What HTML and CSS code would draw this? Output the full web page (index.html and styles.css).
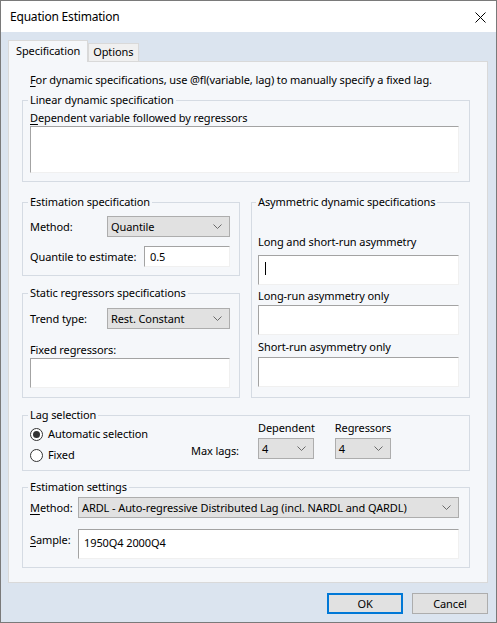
FILE: index.html
```html
<!DOCTYPE html>
<html>
<head>
<meta charset="utf-8">
<title>Equation Estimation</title>
<link rel="stylesheet" href="styles.css">
</head>
<body>
<div class="window">
  <div class="titlebar">
    <span class="title">Equation Estimation</span>
    <svg class="close" width="11" height="11" viewBox="0 0 11 11"><path d="M0.5 0.5L10.5 10.5M10.5 0.5L0.5 10.5" stroke="#000" stroke-width="1"/></svg>
  </div>
  <div class="client">
    <div class="tabs">
      <div class="tab active">Specification</div>
      <div class="tab">Options</div>
    </div>
    <div class="panel">
      <div class="intro"><u>F</u>or dynamic specifications, use @fl(variable, lag) to manually specify a fixed lag.</div>

      <fieldset class="group g-linear">
        <legend>Linear dynamic specification</legend>
        <div class="lbl"><u>D</u>ependent variable followed by regressors</div>
        <div class="edit h47"></div>
      </fieldset>

      <div class="cols">
        <div class="col-left">
          <fieldset class="group g-est">
            <legend>Estimation specification</legend>
            <div class="row r-method">
              <span class="rlbl w77">Method:</span>
              <div class="combo c-wide"><span>Quantile</span><svg width="9" height="5" viewBox="0 0 9 5"><path d="M0.5 0.5L4.5 4.5L8.5 0.5" fill="none" stroke="#6a6a6a"/></svg></div>
            </div>
            <div class="row r-quant">
              <span class="rlbl w114">Quantile to estimate:</span>
              <div class="edit e-quant">0.5</div>
            </div>
          </fieldset>

          <fieldset class="group g-static">
            <legend>Static regressors specifications</legend>
            <div class="row r-trend">
              <span class="rlbl w77">Trend type:</span>
              <div class="combo c-wide"><span>Rest. Constant</span><svg width="9" height="5" viewBox="0 0 9 5"><path d="M0.5 0.5L4.5 4.5L8.5 0.5" fill="none" stroke="#6a6a6a"/></svg></div>
            </div>
            <div class="lbl l-fixed">Fixed regressors:</div>
            <div class="edit h30"></div>
          </fieldset>
        </div>

        <fieldset class="group g-asym">
          <legend>Asymmetric dynamic specifications</legend>
          <div class="lbl l-ls">Long and short-run asymmetry</div>
          <div class="edit h30 e-ls"><span class="caret"></span></div>
          <div class="lbl l-lr">Long-run asymmetry only</div>
          <div class="edit h30 e-lr"></div>
          <div class="lbl l-sr">Short-run asymmetry only</div>
          <div class="edit h30 e-sr"></div>
        </fieldset>
      </div>

      <fieldset class="group g-lag">
        <legend>Lag selection</legend>
        <div class="lagrow">
          <div class="radios">
            <div class="radio on"><span class="dot"></span>Automatic selection</div>
            <div class="radio"><span class="dot"></span>Fixed</div>
          </div>
          <span class="maxlags">Max lags:</span>
          <div class="lagcol">
            <span class="laglbl">Dependent</span>
            <div class="combo c-small"><span>4</span><svg width="9" height="5" viewBox="0 0 9 5"><path d="M0.5 0.5L4.5 4.5L8.5 0.5" fill="none" stroke="#6a6a6a"/></svg></div>
          </div>
          <div class="lagcol">
            <span class="laglbl">Regressors</span>
            <div class="combo c-small"><span>4</span><svg width="9" height="5" viewBox="0 0 9 5"><path d="M0.5 0.5L4.5 4.5L8.5 0.5" fill="none" stroke="#6a6a6a"/></svg></div>
          </div>
        </div>
      </fieldset>

      <fieldset class="group g-settings">
        <legend>Estimation settings</legend>
        <div class="row r-smethod">
          <span class="rlbl w48"><u>M</u>ethod:</span>
          <div class="combo c-full"><span>ARDL - Auto-regressive Distributed Lag (incl. NARDL and QARDL)</span><svg width="9" height="5" viewBox="0 0 9 5"><path d="M0.5 0.5L4.5 4.5L8.5 0.5" fill="none" stroke="#6a6a6a"/></svg></div>
        </div>
        <div class="row r-sample">
          <span class="rlbl w48 l-sample"><u>S</u>ample:</span>
          <div class="edit e-sample">1950Q4 2000Q4</div>
        </div>
      </fieldset>
    </div>
    <div class="buttons">
      <div class="btn default">OK</div>
      <div class="btn">Cancel</div>
    </div>
  </div>
</div>
</body>
</html>
```

FILE: styles.css
```css
* { box-sizing: border-box; }
html, body { margin: 0; padding: 0; background: #ffffff; }
body {
  font-family: "Noto Sans", "Open Sans", sans-serif;
  font-size: 11px;
  letter-spacing: -0.1px;
  line-height: 16px;
  color: #000;
}
u { text-decoration: underline; text-underline-offset: 2px; }

.window {
  width: 497px;
  height: 623px;
  border: 1px solid #7a7a7a;
  background: #dbe4ef;
  display: flex;
  flex-direction: column;
}

.titlebar {
  height: 31px;
  flex: none;
  background: #ffffff;
  display: flex;
  align-items: center;
  justify-content: space-between;
  padding: 0 10px 0 9px;
}
.title { font-size: 12px; letter-spacing: -0.2px; }
.close { display: block; margin-top: 1px; }

.client {
  flex: 1;
  display: flex;
  flex-direction: column;
  padding: 8px 8px 0 7px;
}

.tabs {
  display: flex;
  align-items: flex-end;
  height: 21px;
}
.tab {
  border: 1px solid #d9d9d9;
  border-bottom: none;
  background: #f0f0f0;
  height: 18px;
  line-height: 16px;
  padding: 0 5px 0 4px;
}
.tab.active {
  background: #f5f7fa;
  height: 22px;
  margin-bottom: -1px;
  padding: 2px 7px 0 7px;
  position: relative;
  z-index: 1;
}

.panel {
  flex: none;
  height: 522px;
  background: #f5f7fa;
  border: 1px solid #d9d9d9;
  padding: 10px 17px 0 13px;
}

.intro { margin-left: 8px; white-space: nowrap; }

.group {
  margin: 0;
  border: 1px solid #d5dbe3;
  padding: 0 10px 0 7px;
  min-width: 0;
}
.group legend {
  padding: 0 2px;
  margin-left: -2px;
  line-height: 16px;
}

.edit {
  background: #ffffff;
  border-top: 1px solid #a3a3a3;
  border-left: 1px solid #a3a3a3;
  border-right: 1px solid #f0f0f0;
  border-bottom: 1px solid #f0f0f0;
  padding: 0 5px;
}
.h47 { height: 47px; }
.h30 { height: 30px; }

.combo {
  background: #e1e1e1;
  border: 1px solid #adadad;
  height: 21px;
  display: flex;
  align-items: center;
  justify-content: space-between;
  padding: 0 7px 0 3px;
  white-space: nowrap;
}
.combo svg { display: block; flex: none; }

.row { display: flex; align-items: center; }
.rlbl { flex: none; white-space: nowrap; }
.w77 { width: 77px; }
.w114 { width: 114px; }
.w48 { width: 48px; }

/* Linear */
.g-linear { margin-top: 4px; padding-bottom: 8px; }
.g-linear .lbl { margin-top: 2px; }

/* Columns */
.cols {
  display: flex;
  gap: 11px;
  margin-top: 12px;
}
.col-left { width: 218px; flex: none; display: flex; flex-direction: column; }
.g-asym { flex: 1; padding: 0 10px 9px 6px; }

.g-est { padding: 0 9px 8px 7px; }
.r-method { margin-top: 6px; }
.c-wide { flex: 1; }
.r-quant { margin-top: 9px; }
.e-quant { flex: 1; height: 21px; line-height: 19px; }

.g-static { margin-top: 9px; padding: 0 9px 9px 7px; flex: 1; }
.r-trend { margin-top: 7px; }
.l-fixed { margin-top: 13px; }

.l-ls { margin-top: 24px; }
.e-ls { margin-top: 5px; padding: 6px 6px 0; }
.caret { display: block; width: 1px; height: 13px; background: #000; }
.l-lr { margin-top: 3px; }
.e-lr { margin-top: 1px; }
.l-sr { margin-top: 4px; }
.e-sr { margin-top: 2px; }

/* Lag */
.g-lag { margin-top: 9px; padding: 0 10px 7px 7px; }
.lagrow { display: flex; align-items: flex-start; margin-top: -3px; }
.radios { width: 161px; display: flex; flex-direction: column; gap: 5px; margin-top: 6px; }
.radio { display: flex; align-items: center; height: 16px; }
.radio .dot {
  width: 13px; height: 13px;
  border: 1px solid #333;
  border-radius: 50%;
  background: #fff;
  margin-right: 5px;
  display: flex; align-items: center; justify-content: center;
}
.radio.on .dot::after {
  content: "";
  width: 7px; height: 7px;
  border-radius: 50%;
  background: #333;
}
.maxlags { width: 67px; margin-top: 23px; }
.lagcol { display: flex; flex-direction: column; margin-right: 20px; }
.laglbl { margin-bottom: 2px; }
.c-small { width: 56px; }

/* Settings */
.g-settings { margin-top: 8px; padding: 0 10px 8px 7px; }
.r-smethod { margin-top: 2px; }
.c-full { flex: 1; }
.r-sample { margin-top: 11px; align-items: flex-start; }
.l-sample { margin-top: 3px; }
.e-sample { flex: 1; height: 30px; padding-top: 5px; }

.buttons {
  display: flex;
  justify-content: flex-end;
  gap: 9px;
  margin-top: 10px;
}
.btn {
  width: 76px;
  height: 21px;
  background: #e1e1e1;
  border: 1px solid #adadad;
  text-align: center;
  line-height: 19px;
}
.btn.default {
  border: 2px solid #0078d7;
  line-height: 17px;
}
```
